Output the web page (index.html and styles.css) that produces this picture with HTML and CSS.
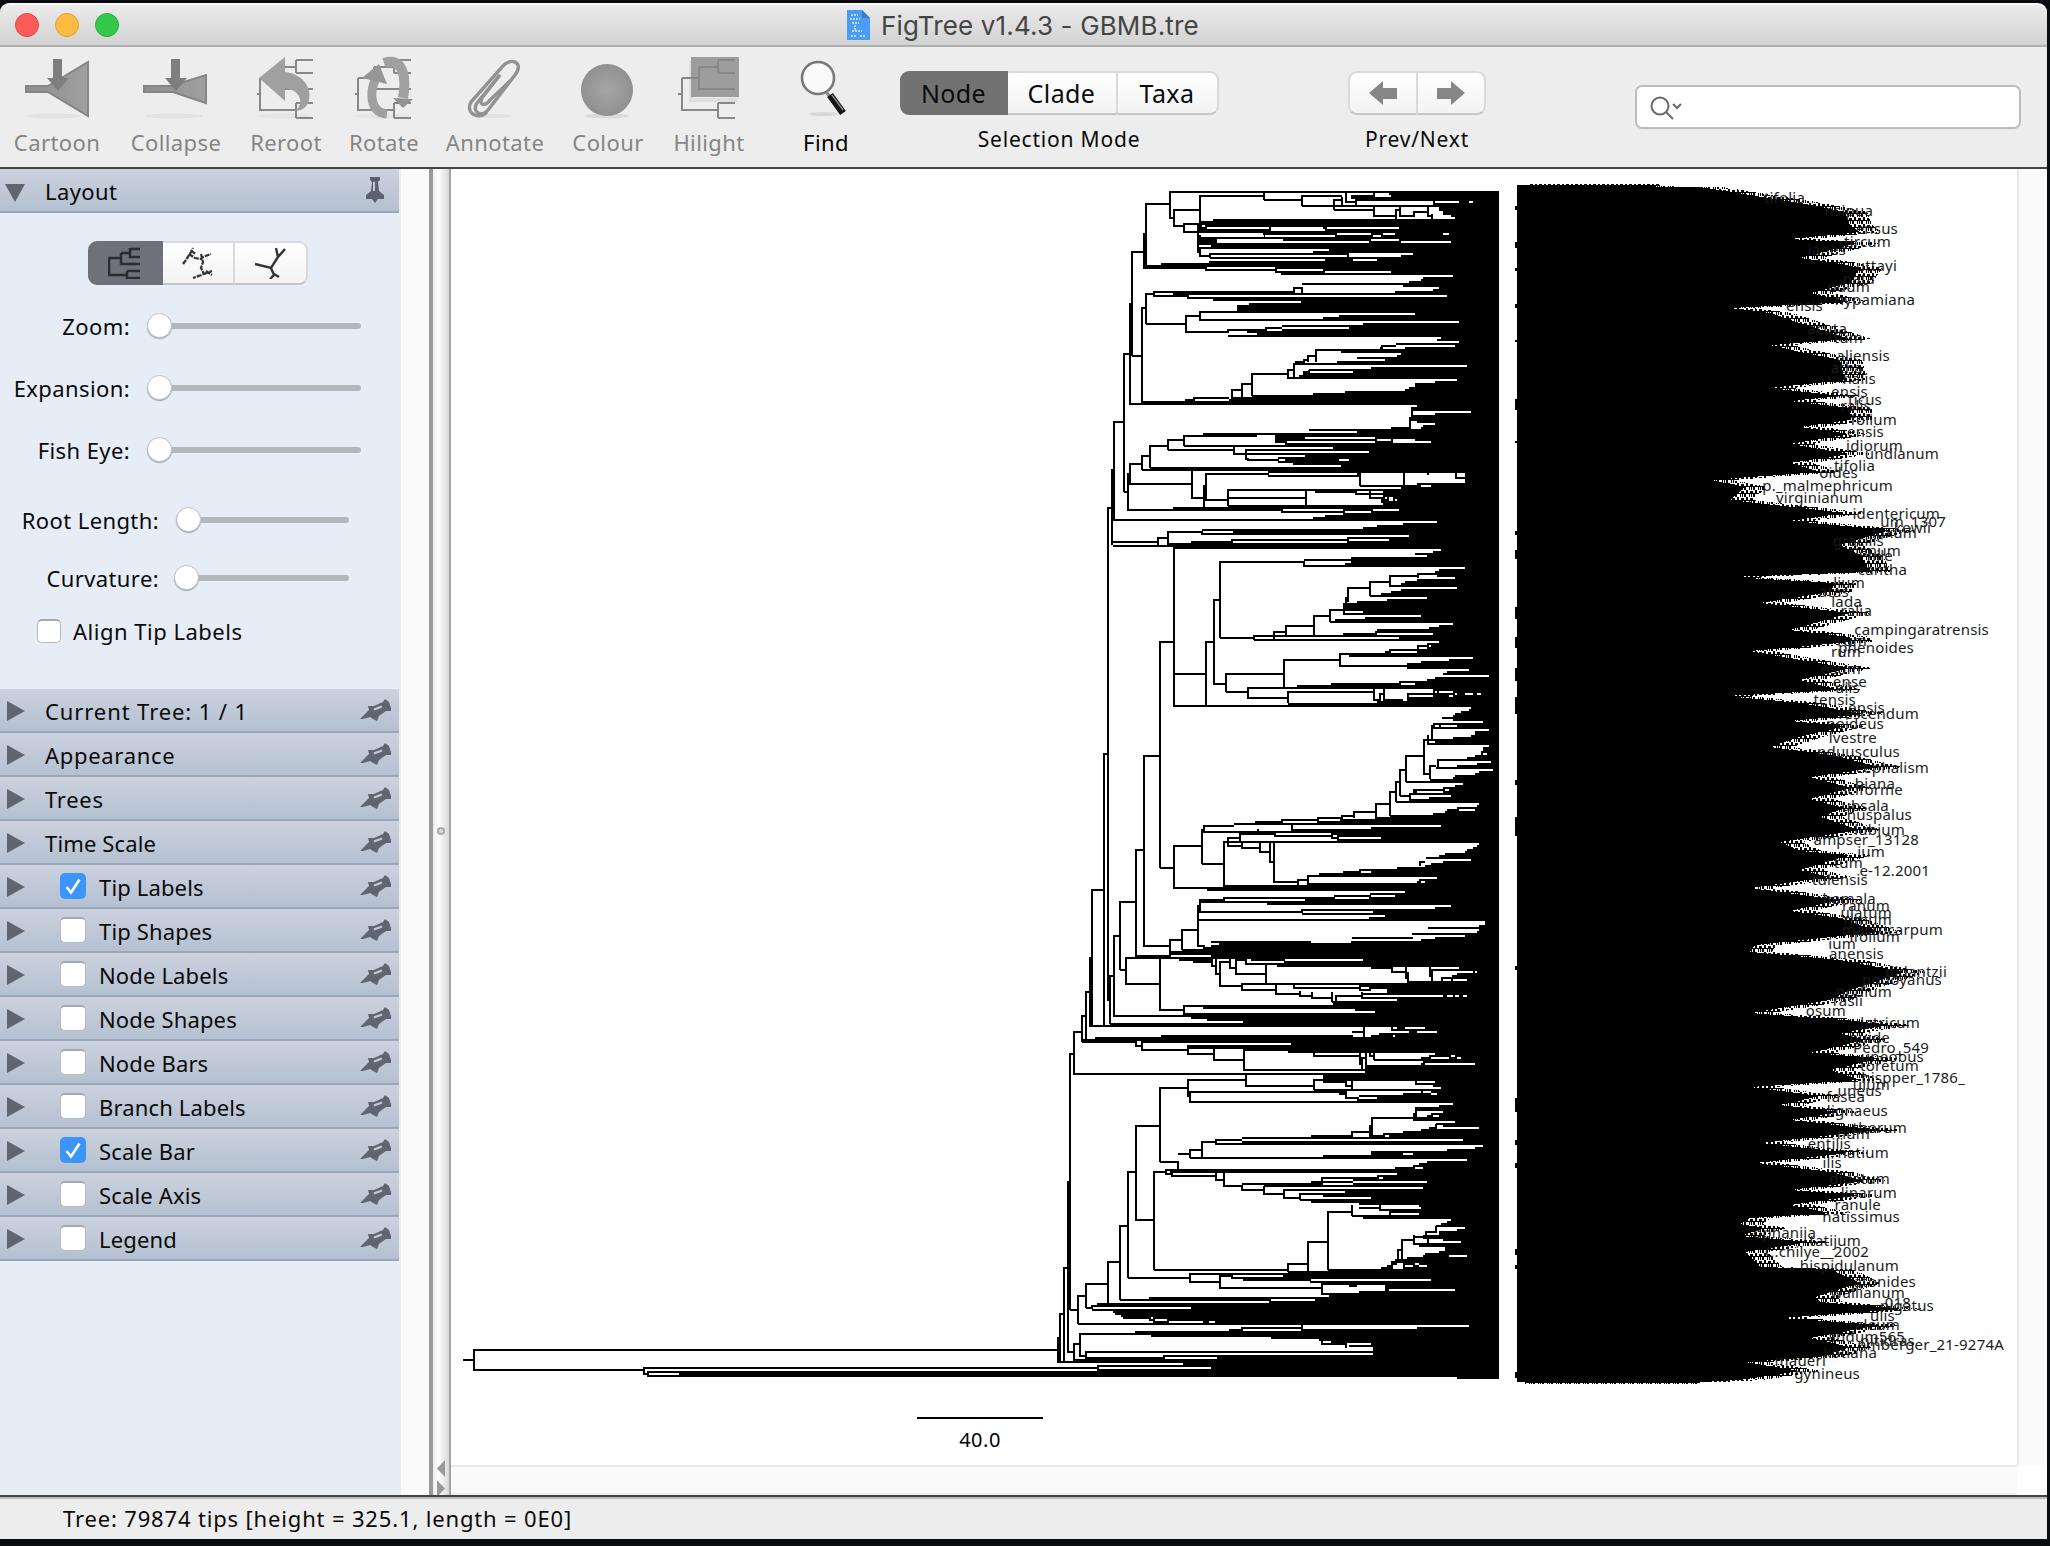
FILE: index.html
```html
<!DOCTYPE html>
<html lang="en">
<head>
<meta charset="utf-8">
<title>FigTree v1.4.3 - GBMB.tre</title>
<link rel="stylesheet" href="styles.css">
</head>
<body>
<svg class="defs" width="0" height="0" aria-hidden="true">
  <defs>
    <symbol id="pin" viewBox="0 0 32 24"><path d="M0 20L6 14L9 11L8 7H14L23 3L25 0L29 3L31 9V12L26 12L19 17L17 22L13 20L10 18L3 20Z" fill="#5f6670"/><path d="M14 10.500L22 7.500" stroke="#c3cad7" stroke-width="2"/></symbol>
    <symbol id="right" viewBox="0 0 18 20"><path d="M0 0L18 10L0 20Z" fill="#60666f"/></symbol>
    <symbol id="check" viewBox="0 0 26 26"><path d="M6.500 14L11 19.500L19.500 6.500" fill="none" stroke="#fff" stroke-width="2.600"/></symbol>
    <linearGradient id="metal" x1="0" y1="0" x2="1" y2="0"><stop offset="0" stop-color="#8e8e8e"/><stop offset="1" stop-color="#a0a0a0"/></linearGradient>
    <radialGradient id="ball"><stop offset="0" stop-color="#a6a6a6"/><stop offset="1" stop-color="#909090"/></radialGradient>
    <pattern id="grain" width="9" height="7" patternUnits="userSpaceOnUse"><path d="M0 1H3V3H9V4H5V7H3V4H0ZM5 0H7V3H5ZM8 4H9V7H8ZM1 4H2V7H1Z"/></pattern>
  </defs>
</svg>
<div class="window">
  <header class="titlebar">
    <div class="lights"><i class="close"></i><i class="min"></i><i class="max"></i></div>
    <div class="title">
      <svg width="23" height="30" viewBox="0 0 23 30"><path d="M0 0H15L23 8V30H0Z" fill="#4c9bf5"/><path d="M15 0V8H23Z" fill="#3a7cc9"/><g fill="none" stroke="#b7dbff" stroke-width="2" stroke-dasharray="2 1"><path d="M4 5H11M3 9H13M5 13H12M8 15V21M5 21H15M4 26H9M13 26H18"/></g></svg>
      <span>FigTree v1.4.3 - GBMB.tre</span>
    </div>
  </header>
  <div class="toolbar">
    <div class="tool"><svg width="72" height="66"><ellipse cx="34" cy="60" rx="28" ry="2.500" fill="#e2e2e2"/><path d="M6 30H28L68 6V60L28 36H6Z" fill="url(#metal)" stroke="#858585" stroke-width="2"/><path d="M33 3H42V22H49L38 35L27 22H33Z" fill="#7e7e7e"/></svg><span>Cartoon</span></div>
    <div class="tool"><svg width="72" height="66"><ellipse cx="35" cy="60" rx="29" ry="2.500" fill="#e2e2e2"/><path d="M5 30H32L67 19V47L34 36H5Z" fill="url(#metal)" stroke="#858585" stroke-width="2"/><path d="M32 3H41V22H48L37 35L26 22H32Z" fill="#7e7e7e"/></svg><span>Collapse</span></div>
    <div class="tool"><svg width="72" height="66"><ellipse cx="35" cy="60" rx="28" ry="2.500" fill="#e4e4e4"/><path d="M8 38H11M11 22V54H47M47 47V62M47 47H64M47 62H64M11 22H27M27 11H47M47 4V17M47 4H64M47 17H64M27 11V33H64" fill="none" stroke="#888" stroke-width="2"/><path d="M10 22L36 1V16C54 18 63 32 60 44C58 52 53 54 47 55C55 46 52 35 36 32V45Z" fill="#a0a0a0"/></svg><span>Reroot</span></div>
    <div class="tool"><svg width="72" height="66"><ellipse cx="35" cy="60" rx="28" ry="2.500" fill="#e4e4e4"/><path d="M8 38H11M11 22V54H47M47 47V62M47 47H64M47 62H64M11 22H27M27 11H47M47 4V17M47 4H64M47 17H64M27 11V33H64" fill="none" stroke="#888" stroke-width="2"/><path d="M40 58C22 56 23 36 28 24" fill="none" stroke="#a0a0a0" stroke-width="9"/><path d="M15 22L32 8L40 28Z" fill="#969696"/><path d="M37 7C55 1 60 19 56 42" fill="none" stroke="#a0a0a0" stroke-width="10"/><path d="M46 42L66 43L56 52Z" fill="#929292"/></svg><span>Rotate</span></div>
    <div class="tool"><svg width="72" height="66"><ellipse cx="35" cy="60" rx="17" ry="2" fill="#e0e0e0"/><g fill="none" stroke="#929292" stroke-width="3.400" stroke-linecap="round"><path d="M41 20L19 47C13 56 24 62 30 54L57 19C67 6 52 1 45 10L13 46C7 57 20 64 28 57"/><path d="M41 20L24 42C20 50 28 50 32 44L52 25"/></g></svg><span>Annotate</span></div>
    <div class="tool"><svg width="72" height="66"><ellipse cx="36" cy="60" rx="22" ry="2.500" fill="#dadada"/><circle cx="36" cy="34" r="26" fill="url(#ball)"/></svg><span>Colour</span></div>
    <div class="tool"><svg width="72" height="66"><path d="M17 4H22V42H66V46H17Z" fill="#dedede"/><path d="M19 1H67V41H19Z" fill="#9d9d9d"/><path d="M6 38H10M10 22V54H46M46 47V62M46 47H63M46 62H63M10 22H27M27 11H46M46 4V17M46 4H63M46 17H63M27 11V33H63" fill="none" stroke="#888" stroke-width="2"/></svg><span>Hilight</span></div>
    <div class="tool find"><svg width="72" height="66"><ellipse cx="34" cy="58" rx="14" ry="2" fill="#d8d8d8"/><circle cx="29" cy="22" r="16" fill="#fafafa" stroke="#777" stroke-width="2.500"/><path d="M37 36L42 42" stroke="#888" stroke-width="3"/><path d="M41 39L54 57" stroke="#151515" stroke-width="7"/><path d="M43 39L54 54" stroke="#888" stroke-width="1.500"/></svg><span>Find</span></div>
    <div class="group">
      <div class="segments modes"><b class="on">Node</b><b>Clade</b><b>Taxa</b></div>
      <span>Selection Mode</span>
    </div>
    <div></div>
    <div class="group">
      <div class="segments nav"><b><svg width="28" height="24"><path d="M0 12L14 0V7H28V18H14V24Z" fill="#868686"/></svg></b><b><svg width="28" height="24"><path d="M28 12L14 0V7H0V18H14V24Z" fill="#868686"/></svg></b></div>
      <span>Prev/Next</span>
    </div>
    <div></div>
    <div class="search"><svg width="36" height="26" fill="none" stroke="#6a6a6a" stroke-width="2"><circle cx="10" cy="10" r="8.500"/><path d="M16 16L23 23M23 8L27 12L31 8"/></svg></div>
  </div>
  <main class="body">
    <aside class="sidebar">
      <div class="row open"><svg class="tri" width="20" height="18"><path d="M0 0H20L10 18Z" fill="#60666f"/></svg><span>Layout</span><svg class="pinned" width="18" height="26"><path d="M4 0H14V3L12 5L13 14L18 18V22H12L9 26L6 22H0V18L5 14L6 5L4 3Z" fill="#5c626c"/><path d="M8 5V14" stroke="#c3cad7" stroke-width="2"/></svg></div>
      <div class="panel">
        <div class="segments layouts">
          <b class="on"><svg width="34" height="32"><path d="M1 10V28H19M19 24V31H32M19 24H32M1 11H13M13 6V17H32M13 6H22M22 1V10H32M22 2H32" fill="none" stroke="#292c30" stroke-width="2.500"/></svg></b>
          <b><svg width="34" height="32"><path d="M2 17L5 13L10 5L12 1M8 7L14 11L20 12L22 10L30 7M20 7L22 15L20 21L23 27L12 31M23 27L31 24M10 4L15 7M25 24L31 28" fill="none" stroke="#333" stroke-width="2.200" stroke-dasharray="5 1"/></svg></b>
          <b><svg width="34" height="32"><path d="M1 17L17 21L24 10L22 1M24 10L31 2M17 21L20 28L16 32M20 27L25 30" fill="none" stroke="#333" stroke-width="2.400"/></svg></b>
        </div>
        <div class="slide a"><label>Zoom:</label><i><u></u></i></div>
        <div class="slide a"><label>Expansion:</label><i><u></u></i></div>
        <div class="slide a"><label>Fish Eye:</label><i><u></u></i></div>
        <div class="slide b root-length"><label>Root Length:</label><i><u></u></i></div>
        <div class="slide b curve"><label>Curvature:</label><i><u></u></i></div>
        <div class="align"><em class="box"></em><span>Align Tip Labels</span></div>
      </div>
      <div class="row current"><svg class="tri"><use href="#right"/></svg><span>Current Tree: 1 / 1</span><svg class="pin"><use href="#pin"/></svg></div>
      <div class="row"><svg class="tri"><use href="#right"/></svg><span class="wide">Appearance</span><svg class="pin"><use href="#pin"/></svg></div>
      <div class="row"><svg class="tri"><use href="#right"/></svg><span class="wide">Trees</span><svg class="pin"><use href="#pin"/></svg></div>
      <div class="row"><svg class="tri"><use href="#right"/></svg><span>Time Scale</span><svg class="pin"><use href="#pin"/></svg></div>
      <div class="row"><svg class="tri"><use href="#right"/></svg><em class="box on"><svg><use href="#check"/></svg></em><span>Tip Labels</span><svg class="pin"><use href="#pin"/></svg></div>
      <div class="row"><svg class="tri"><use href="#right"/></svg><em class="box"></em><span>Tip Shapes</span><svg class="pin"><use href="#pin"/></svg></div>
      <div class="row"><svg class="tri"><use href="#right"/></svg><em class="box"></em><span>Node Labels</span><svg class="pin"><use href="#pin"/></svg></div>
      <div class="row"><svg class="tri"><use href="#right"/></svg><em class="box"></em><span>Node Shapes</span><svg class="pin"><use href="#pin"/></svg></div>
      <div class="row"><svg class="tri"><use href="#right"/></svg><em class="box"></em><span>Node Bars</span><svg class="pin"><use href="#pin"/></svg></div>
      <div class="row"><svg class="tri"><use href="#right"/></svg><em class="box"></em><span>Branch Labels</span><svg class="pin"><use href="#pin"/></svg></div>
      <div class="row"><svg class="tri"><use href="#right"/></svg><em class="box on"><svg><use href="#check"/></svg></em><span>Scale Bar</span><svg class="pin"><use href="#pin"/></svg></div>
      <div class="row"><svg class="tri"><use href="#right"/></svg><em class="box"></em><span>Scale Axis</span><svg class="pin"><use href="#pin"/></svg></div>
      <div class="row"><svg class="tri"><use href="#right"/></svg><em class="box"></em><span>Legend</span><svg class="pin"><use href="#pin"/></svg></div>
    </aside>
    <div class="track side"></div>
    <div class="splitter"><i class="dot"></i><svg width="10" height="40"><path d="M9 0V17L1 8.500ZM1 20V37L9 28.500Z" fill="#999"/></svg></div>
    <section class="view">
      <svg class="tree" viewBox="451 169 1566 1296" width="1566" height="1296">
        <!-- upper clades -->
        <g transform="translate(1040 170) scale(.333333)">
          <path d="M1377 63H1047V75H933V93H1180V105H1003V111H1197V123H1209V135H1233V141H1245V147H519V153H478V171H474V195H672V201H483V219H513V225H477V237H819V249H510V267H855V273H507V279H363V285H315V291H498V303H708V309H723V315H1239V321H1149V327H1143V333H1107V339H786V345H1089V351H1197V357H1179V363H1065V369H399V375H1221V381H444V387H519V393H783V399H627V405H591V423H480V429H1125V435H897V441H849V447H480V453H1257V459H969V465H726V471H927V477H726V483H621V489H651V495H564V501H1203V507H1191V513H1257V519H1068V525H1245V531H1095V537H828V543H903V549H1083V555H1071V561H951V567H1035V573H891V579H762V585H1281V591H993V597H808V603H939V609H790V615H777V621H744V627H1251V633H1185V639H1125V651H1107V657H1095V663H915V669H819V675H636V681H573V687H567V693H489V699H270V705H1131V711H1113V723H1293V729H1185V735H1113V741H1107V753H1131V759H1185V765H1149V771H1053V777H808V783H951V789H489V795H432V801H705V819H735V825H432V831H879V837H615V843H987V849H621V855H795V861H714V879H759V885H903V891H330V897H306V903H684V921H1245V927H1275V939H1131V945H960V951H1083V957H564V963H825V969H945V975H1029V981H1023V999H1029V1005H564V1011H399V1017H723V1029H909V1035H855V1041H819V1047H220V1053H1191V1059H1089V1065H1011V1071H969V1077H486V1083H579V1089H486V1095H1107V1101H921V1107H573V1113H453V1119H384V1125H220V1131H399V1137H1377Z"/>
          <path class="cut" d="M921 72H1002M1005 78H1053M927 90H945M1185 96H1257M1287 96H1299M486 168H495M501 174H690M693 174H849M693 180H855M861 174H1077M477 192H669M891 192H993M1029 192H1065M1209 192H1227M675 198H885M999 198H1023M531 210H729M993 210H1077M531 216H987M1083 216H1233M477 228H513M483 240H867M927 252H1119M513 258H921M927 258H1083M939 270H1011M501 294H705M711 300H849M855 306H1053M1113 774H1143M651 798H705M795 804H1005M1011 810H1053M1059 810H1125M741 816H1005M1059 816H1173M717 870H735M897 870H927M687 912H951M963 912H1089M963 918H1089M1095 912H1161M1095 918H1245M963 924H1089M1167 912H1245M1251 912H1275M1251 918H1275M1143 948H1173M951 966H987M993 966H1029M1035 984H1041M1047 984H1059M1047 990H1059M1065 990H1071M729 1020H909M999 1020H1077M915 1026H993M927 1110H1047M579 1116H921"/>
          <path class="ln" d="M390 63V147M318 99V285M402 117V171M318 102H390M388 66H1060M390 144H402M402 120H480M480 75V156M480 78H672M672 66V90M672 90H786M786 75V108M786 78H906M786 108H906M882 87V120M882 90H906M906 80V111M918 66V96H948V108M906 108H1180M882 120H1002M1002 108V138H1068M1068 147V120H1080V108V138H1122V126H1164V111V138H1176V132V147M1002 66V81M402 168H432M432 159V189M432 162H480M432 186H474M474 160V249M480 195V222H519V207H528M474 246H480V234V258H510V249V264M690 171V183M312 189V297M276 243V558M276 246H312M309 294H498V303M498 300H708V291V306H855M270 399V705M306 411V699M306 414H318V369V462M318 372H342V363V378H444V384H520M342 366H762V354H786V372M762 366V372M318 462H438V435V486H564V477M438 438H480V423V453M564 480H678V474H726M678 471V486M276 558H306M252 552H270M252 549V966M1020 534H1026V528H1068M828 537V576M828 558H804V576M804 570H792V576H765M762 579V627M762 600H744V627M808 600V606H792V618M744 612H636V678M636 642H606V681M606 660H576V687M567 684H462V699M462 690H438V699M306 696H490M222 756H252M222 753V1053M1116 711V741M1110 741V777M432 795V828M432 810H384V840M384 828H330V894M384 840H582V828V852H618V837V867H624V870H714M330 858H306V900M306 882H270V942H456M456 900V984H492M492 945V1011M498 909V990M492 990H564V957V1008M564 984H798V960V1008M498 912H684M264 909V1020H726M252 966H264M960 909V948M1092 912V948M1248 909V924M990 963V984H1029M216 897V1125M204 1170V1014H216M219 1116H354V1104H384V1083V1128M354 1104V1128M219 1128H402M384 1086H486V1095"/>
        </g>
        <!-- middle clades -->
        <g transform="translate(1040 540) scale(.333333)">
          <path d="M1377 27H1203V33H1179V39H1125V45H1161V51H933V57H792V63H933V69H915V75H792V81H1275V87H1197V93H1185V99H1131V105H1191V111H1245V117H1131V123H1095V129H1083V135H1050V141H1251V147H1083V153H1053V159H1023V165H990V171H1161V177H1041V183H951V189H909V213H969V219H909V225H1143V231H975V237H885V243H870V249H1239V255H1197V261H1167V267H1011V273H1005V279H909V285H738V291H1077V297H642V303H1197V309H1161V327H1050V333H1035V339H900V345H927V351H1299V357H1227V363H1143V369H1101V375H900V381H1101V387H1287V393H1221V399H1209V405H1347V411H1185V417H1161V423H1077V435H771V441H624V447H1179V471H1101V477H1087V483H1011V489H744V495H399V501H1293V507H1287V513H1263V519H1245V525H1239V531H1206V537H1239V543H1329V549H1179V555H1173V567H1347V573H1305V585H1293V591H1239V597H1152V603H1161V615H1347V621H1329V633H1323V645H1305V651H1281V657H1191V663H1353V669H1311V675H1251V681H1188V687H1359V693H1317V699H1305V705H1245V711H1239V717H1170V723H1098V729H1269V735H1245V741H1209V747H1119V759H1110V765H1233V771H1167V777H1110V783H1068V789H1317V795H1311V801H1251V807H1221V813H1215V819H1179V825H1050V831H1005V837H723V843H645V849H582V855H1203V861H993V867H651V873H486V879H873V885H891V897H891V903H552V909H1317V915H1311V921H1299V927H1281V933H1275V939H1215V945H1197V951H1158V957H1293V963H1209V969H1173V975H1155V981H1071V987H957V993H909V999H837V1005H804V1011H1191V1017H1137V1023H1131V1029H804V1035H552V1041H399V1047H501V1053H1095V1059H990V1065H882V1071H552V1077H795V1083H480V1089H681V1095H1233V1101H1185V1107H786V1113H999V1119H786V1125H1035V1131H987V1137H474V1143H1377Z"/>
          <path class="cut" d="M1011 282H1179M1167 318H1173M1053 336H1131M1083 432H1125M1185 456H1191M1197 456H1239M1245 462H1251M1275 462H1299M1311 462H1323M1227 468H1239M1089 480H1101M1185 558H1197M1203 558H1251M1167 606H1185M1329 642H1341M1215 750H1227M1131 756H1209M1257 810H1305M837 840H900M729 846H831M657 870H753M897 894H1023M963 996H993M1143 1026H1155M993 1068H1065M885 1074H987"/>
          <path class="ln" d="M204 0V1170M402 18V498M540 63V294M540 66H792V81M522 180H540M522 177V432H558M498 306H522M498 303V498M402 402H498M558 399V456M558 402H732M732 357V444M732 360H900V339V378H1101M558 456H624M624 441V474H744M744 489V456H1002M1002 447V480H1020V459M1020 486V462H1032V447V480H1090M1104 477V462H1180M540 294H642V285V300M642 288H738V258H822M702 297V276H738M822 288V228H870M870 207V246M870 210H912M912 189V222M918 171V189M924 186V144H990M990 123V168M990 126H1050V105V138H1083M1050 108H1134V99V114M1050 327V336M1134 330V318H1164M876 441V432H1077M360 303V984M360 306H402M312 648H360M312 645V1170M288 930H312M288 927V1170M240 1170V1086H288M192 1170V642H204M156 1170V1050H192M360 984H402M402 915V1044M402 918H486M486 867V972M486 972H552M492 876V858H582M552 903V1040M552 906H564V894H600V879V906M564 894V918H606V906V924H660V906V936H690V906V966H702V906V1026H774M600 882H705V888H876V879V894H894V900M774 1038V1020H804V1005V1035M756 855V873M1176 555V600M1164 585V600M1152 597V702H1170M1170 717V678H1188M1194 660V684M1098 726V648H1152M1080 768V690H1098M1080 768H1110M1068 786V726H1080M1050 828V756H1068M1008 834V792H1050M942 834V816H1008M906 840V828H942M834 846V834H906M726 846V840H834M1110 759V783M1140 978V966H1155M480 1116V1080H552V1071V1086M474 1170V1095M480 1116H786"/>
        </g>
        <!-- lower clades -->
        <g transform="translate(1040 900) scale(.333333)">
          <path d="M1377 63H1335V75H1317V81H1163V87H1317V93H1311V99H1116V105H1275V111H936V117H1143V123H513V129H537V135H489V147H426V153H387V165H288V171H258V177H417V183H735V189H618V195H711V201H993V207H1257V213H1299V219H1251V225H1236V231H1203V243H1101V249H603V255H957V273H1041V279H963V303H876V309H879V315H432V321H489V327H945V333H1005V339H432V345H220V351H453V357H501V363H609V369H210V375H150V381H969V387H1053V393H936V399H1017V405H363V411H165V417H125V429H753V435H444V447H609V453H744V459H1185V465H1167V471H1143V477H1002V483H1149V489H1143V495H978V501H975V507H609V513H975V519H99V525H618V531H849V543H1125V555H1179V561H1203V567H822V573H900V579H1089V585H957V603H447V609H1239V615H1197V621H1131V627H1125V633H1209V639H1173V645H1161V651H996V657H1119V663H1245V669H1188V675H1209V681H1167V687H1143V693H1089V699H1030V705H813V711H606V717H1269V723H606V729H525V735H1329V741H1305V747H1221V753H993V765H849V771H450V777H1281V783H1161V789H1137V795H1119V801H1065V807H375V813H390V819H1071V825H1011V831H846V837H939V843H813V849H606V855H672V861H1149V867H732V873H915V879H780V885H849V891H993V897H780V903H813V909H957V915H1137V921H1143V927H1017V933H1047V945H936V951H969V957H1233V963H1221V969H1203V975H1188V981H1275V987H1251V993H1197V1005H1149V1017H1209V1023H1263V1029H1140V1041H1215V1053H1197V1059H1155V1065H1149V1071H1101V1077H1065V1083H1053V1095H1041V1101H1023V1107H864V1113H744V1119H447V1125H540V1131H573V1137H609V1143H810V1149H846V1155H927V1161H1035V1173H957V1179H846V1185H867V1191H327V1197H240V1203H687V1209H171V1215H153V1227H156V1233H219V1239H225V1245H243V1251H249V1257H327V1263H339V1269H114V1275H783V1281H603V1287H567V1293H285V1299H120V1305H333V1311H693V1317H837V1323H873V1329H993V1335H927V1341H999V1353H135V1359H999V1365H369V1371H135V1377H99V1383H51V1389H429V1395H171V1413H-1083V1431H1251V1437H1377Z"/>
          <path class="cut" d="M1119 114H1185M813 126H933M495 138H513M393 168H513M519 180H525M531 180H567M573 180H585M621 180H633M735 180H969M1059 204H1095M1101 204H1167M1173 204H1257M1263 216H1299M1305 216H1311M1209 240H1233M1239 240H1281M609 258H705M765 258H957M963 264H987M993 270H1041M969 288H1209M1221 288H1239M1245 288H1257M1269 288H1281M891 300H1071M975 384H1053M1059 384H1071M1095 384H1155M975 396H1107M1131 396H1191M939 402H969M939 408H969M975 408H993M1059 408H1065M291 426H303M447 450H519M1233 468H1245M1173 474H1227M1251 474H1263M1155 492H1305M621 528H849M621 534H849M1131 546H1185M921 576H1143M1149 576H1173M1173 582H1191M957 594H1011M1179 648H1197M1191 684H1317M939 702H987M939 708H987M1035 708H1047M531 726H603M1089 762H1119M1125 804H1149M1017 834H1029M939 846H1161M819 852H843M849 852H939M735 876H915M963 918H1017M1053 942H1137M1227 1068H1281M1071 1092H1089M1125 1092H1137M1059 1098H1089M1095 1098H1119M1137 1098H1161M1059 1104H1089M579 1128H729M813 1140H1173M951 1158H1035M1047 1170H1245M693 1200H825M159 1224H453M333 1254H339M345 1260H381M387 1266H489M507 1266H525M789 1278H1287M789 1284H1131M609 1290H783M375 1374H531M177 1404H513"/>
          <path class="ln" d="M156 0V378M192 0V378M204 0V303M150 171V380M138 420V276H150M126 426V348H138M102 522V396H126M90 1230V462H102M240 210V6H288M288 0V171M312 0V138H390V120H426V90H474M390 138V165M426 120V150M474 15V138H492M480 0V36H786V30H1000M240 210H258M258 171V252H360M360 174V330H432M432 315V345M222 348V108H240M210 372V228H222M459 186H516V177V198H528V177V222H540V186H570M540 222V258H606M606 249V270H708V255V282H780V273V288H816V276V294H876V276V306M888 306V288H966V276M570 177V204H588V183V222H678V192V252M618 177V192H735V183M762 255V264H960V255M1056 201V216H1101M1098 201V237M1104 216V246M1170 201V231M1176 243V210H1257M288 420V438H306V426V450H444V435V462H522V444V480H612V447V510M444 444H612M744 456H822V447V468H960M960 447V495M966 507V474H978M978 507V459M972 381V411M978 456H990V468H1002V480M1002 459V480M444 537V590M360 786V564H444V540H618V525V558H822V537V570M822 540H852V546H918V558H936V543V570M444 576H900V582H918V594H954V603M450 573V606M918 573V594M1146 573V588H1092M360 786H414V810M414 762H450V747V774M450 750H486V723V774M486 726H528V717V732M528 720H606M288 678H360M288 675V960H342M342 1110V816H378V822H396V828H528V819V840H552V819V858H606V870H672V858V882H732V867V894H780V879V900M264 1134V816H288M342 1110H744V1092H804V1026H864V936H936V915V948M744 1092V1116M804 1026V1113M864 936V1110M957 924H1020V915V930M813 852H846V831M936 711V696H990M990 675V711M996 651V705M1128 621V657M1122 640V660H1180M1188 672V690M240 1200V978H264M204 1212V1086H240M138 1224V1152H204M138 1224H156M114 1272V1188H138M90 1230H114M264 1134H450V1119V1146H540V1125V1164H846V1149V1185M1086 1077V1020H1122M1122 1005V1032H1140V1041M1074 1080V1050H1086M1164 1014V1029M1188 978V996H1158V1010H1122M1056 1107V1086M84 843V1356H102M72 1385V1104H84M60 1385V1242H72M54 1311V1388M102 1380V1332H120V1299V1368H138V1353M846 1317V1332H918V1344M786 1275V1293M603 1284H786"/>
        </g>
        <path class="root" d="M463 1360H474M474 1349V1371M474 1350H1058M474 1370H644M644 1367V1375M644 1368H1098M644 1374H648M648 1371V1377M648 1372H1100M648 1376H1100"/>
        <g class="names">
          <path id="mass" d="M1517 185L1700 187L1750 195L1800 203L1845 212L1850 225L1860 232L1790 239L1858 243L1800 258L1830 262L1860 268L1850 283L1810 293L1850 302L1730 308L1770 313L1800 323L1850 339L1770 345L1800 352L1840 360L1845 380L1770 388L1840 396L1790 401L1850 408L1850 420L1800 427L1850 434L1790 444L1850 454L1790 463L1820 472L1710 480L1745 487L1730 500L1845 513L1790 521L1890 530L1840 545L1860 555L1870 572L1730 577L1835 583L1830 592L1760 603L1850 613L1790 630L1850 637L1850 642L1750 651L1800 660L1850 668L1800 680L1840 690L1725 696L1800 703L1865 714L1790 721L1845 726L1800 737L1770 747L1830 755L1880 767L1810 777L1850 788L1810 799L1845 808L1820 817L1860 830L1780 842L1800 851L1850 855L1800 870L1830 877L1750 888L1840 900L1790 911L1840 918L1880 932L1755 945L1750 952L1840 960L1905 972L1850 990L1830 1000L1750 1013L1845 1020L1890 1025L1840 1033L1865 1040L1810 1053L1880 1058L1830 1070L1860 1080L1750 1087L1820 1096L1780 1105L1840 1112L1790 1120L1880 1130L1760 1143L1850 1153L1755 1163L1830 1172L1865 1181L1790 1190L1860 1195L1790 1205L1830 1213L1750 1218L1740 1224L1765 1228L1740 1236L1810 1242L1745 1252L1760 1267L1830 1269L1860 1283L1815 1297L1820 1302L1905 1309L1780 1318L1880 1325L1810 1338L1850 1347L1820 1357L1745 1362L1800 1371L1740 1380L1700 1382L1517 1382Z"/>
          <use href="#mass" class="edge" x="22"/>
          <path d="M1530 184H1660V187H1530ZM1525 1381H1700V1384H1525Z" fill="url(#grain)"/>
          <path d="M1516 206V210M1516 242V248M1516 268V271M1516 304V308M1516 340V342M1516 399V410M1516 441V443M1516 531V535M1516 550V559M1516 607V619M1516 637V648M1516 668V681M1516 697V714M1516 780V785M1516 817V836M1516 966V970M1516 1098V1112M1516 1140V1145M1516 1163V1168M1516 1249V1255M1516 1265V1269M1516 1372V1378" stroke="#000" stroke-width="2"/>
          <g id="labels" class="labels"></g>
        </g>
        <path class="root" d="M917 1418H1043"/>
        <text class="scale" x="980" y="1447">40.0</text>
      </svg>
      <div class="track right"></div>
      <div class="track bottom"></div>
    </section>
  </main>
  <footer class="status">Tree: 79874 tips [height = 325.1, length = 0E0]</footer>
</div>
<script src="labels.js"></script>
</body>
</html>
```
FILE: labels.js
```js
// Tip labels that stick out of the crowd: text, right edge, baseline.
const tips = `tifolia 1805 203|nsipua 1873 216|ensus 1898 234|tircum 1891 247|ianes 1846 255|uttayi 1897 271|nata 1875 284|odum 1870 292|hypamiana 1915 305|ensis 1823 311|acuta 1847 334|tum 1863 343|aliensis 1890 361|atha 1863 373|nalis 1876 384|ensis 1868 397|ticus 1882 405|ralis 1871 411|folium 1897 425|ensis 1884 437|idiorum 1903 451|undianum 1939 459|tifolia 1875 471|oides 1858 478|p._malmephricum 1893 491|virginianum 1863 503|identericum 1940 519|um_1307 1946 527|kowii 1931 533|luxum 1917 538|gracilis 1884 546|rianum 1901 556|hile 1893 561|cantha 1907 575|lium 1865 588|atas 1849 597|lada 1862 607|ralia 1872 616|campingaratrensis 1989 635|rum 1867 646|phenoides 1914 653|rum 1861 657|osum 1861 674|ense 1867 687|alis 1860 693|tensis 1856 705|ensis 1885 713|rescendum 1919 719|noideus 1884 729|lvestre 1877 743|nduusculus 1900 757|cephalism 1929 773|biana 1895 789|niciforme 1903 795|ubsala 1889 811|nuspalus 1912 820|lubium 1905 835|ampser_13128 1919 845|ium 1885 857|tum 1863 868|e-12.2001 1930 876|tulensis 1868 885|hamala 1876 904|ranum 1890 911|ulatum 1892 918|rimum 1892 925|macrocarpum 1943 935|ifolium 1900 942|ium 1856 949|anensis 1884 959|didantzii 1947 977|podoyanus 1942 985|nodium 1892 997|rasii 1863 1006|osum 1846 1016|latricum 1920 1028|nuide 1890 1043|Pedro_549 1929 1053|uneobus 1924 1062|toretum 1919 1071|hispper_1786_ 1965 1083|ulum 1890 1090|uneus 1882 1096|fasea 1865 1102|lignaeus 1888 1116|thorum 1907 1133|num 1870 1139|entilis 1851 1149|natium 1889 1158|ilis 1842 1168|didatum 1890 1184|linarum 1897 1198|ranule 1881 1210|natissimus 1900 1222|ophanija 1816 1238|tatijum 1861 1246|C.chilye__2002 1869 1257|hispidulanum 1899 1271|atonides 1916 1287|wallianum 1905 1298|_018 1911 1308|nigatus 1934 1311|ulis 1895 1321|raleum 1900 1330|andum565 1905 1342|nitidras 1915 1346|nmberger_21-9274A 2004 1350|kotiana 1877 1358|maueri 1826 1366|gynineus 1860 1379`;

const layer = document.getElementById("labels");
for (const tip of tips.split("|")) {
  const [name, x, y] = tip.split(" ");
  const text = document.createElementNS("http://www.w3.org/2000/svg", "text");
  text.setAttribute("x", x);
  text.setAttribute("y", y);
  text.textContent = name;
  layer.append(text);
}
```
FILE: styles.css
```css
* { box-sizing: border-box; }
body {
  margin: 0;
  width: 2050px;
  height: 1546px;
  overflow: hidden;
  background: #0b0c0f;
  color: #0a0a0a;
  font: 22px/28px "Noto Sans", sans-serif;
  letter-spacing: .4px;
}
svg { display: block; }
.defs { position: absolute; }
.window {
  width: 2047px;
  height: 1539px;
  padding-top: 3px;
  display: flex;
  flex-direction: column;
}
.titlebar {
  height: 44px;
  flex: none;
  display: grid;
  grid-template-columns: 847px 1fr;
  align-items: center;
  border-radius: 9px 9px 0 0;
  border-top: 2px solid #f8f8f8;
  border-bottom: 2px solid #b0b0b0;
  background: linear-gradient(#ebebeb, #d2d2d2);
}
.lights { display: flex; gap: 16px; padding-left: 15px; }
.lights i { width: 24px; height: 24px; border-radius: 50%; border: 1px solid #e0443e; background: #fc5b57; }
.lights .min { border-color: #dea034; background: #fdbc40; }
.lights .max { border-color: #27aa35; background: #34c84a; }
.title {
  display: flex;
  gap: 11px;
  align-items: center;
  color: #454545;
  font: 26px/30px Inter, sans-serif;
  letter-spacing: .15px;
}
.title span { margin-top: 2px; }
.toolbar {
  height: 122px;
  flex: none;
  display: grid;
  grid-template-columns: 112px 126px 94px 102px 120px 106px 96px 138px 330px 118px 150px 143px 386px;
  background: #ededed;
  border-bottom: 2px solid #444;
}
.tool { display: flex; flex-direction: column; align-items: center; padding-top: 9px; color: #858585; white-space: nowrap; }
.tool span { margin: 6px 0 0 2px; }
.find { color: #000; }
.group { display: flex; flex-direction: column; align-items: center; padding-top: 24px; }
.group > span { margin-top: 10px; font-size: 21px; letter-spacing: .8px; }
.segments { height: 44px; display: flex; }
.segments b {
  display: flex;
  align-items: center;
  justify-content: center;
  font-weight: 400;
  border: 2px solid #d8d9dc;
  border-left-width: 0;
  border-bottom-color: #c2c4c7;
  background: linear-gradient(#fff, #f3f3f3);
}
.segments b:first-child { border-left-width: 2px; border-radius: 9px 0 0 9px; }
.segments b:last-child { border-radius: 0 9px 9px 0; }
.segments b.on { border-color: #727272; background: #727272; }
.modes { width: 319px; font-size: 25px; }
.modes b { width: 110px; }
.modes .on { width: 108px; }
.modes b:last-child { width: 101px; }
.nav { width: 138px; }
.nav b { flex: 1; }
.search {
  height: 44px;
  margin-top: 38px;
  padding: 9px 13px;
  border: 2px solid #bdbdbd;
  border-radius: 7px;
  background: #fff;
}
.body { flex: none; height: 1326px; display: flex; background: #fff; }
.sidebar { width: 399px; background: #e6edf7; }
.row {
  height: 44px;
  padding: 0 7px;
  display: flex;
  align-items: center;
  background: linear-gradient(#ccd2de, #b4c0d1);
  border-bottom: 2px solid #9aa7ba;
  letter-spacing: .15px;
}
.row > span { flex: 1; margin: 1px 0 0 20px; }
.row > .wide { letter-spacing: .7px; }
.current { letter-spacing: .9px; }
.row .tri { width: 18px; height: 20px; margin-top: 2px; }
.row.open { letter-spacing: .4px; }
.row.open .tri { width: 20px; height: 18px; margin: 6px 0 0 -2px; }
.pinned { margin-right: 8px; }
.pin { width: 32px; height: 24px; margin-top: 1px; }
.box {
  width: 26px;
  height: 26px;
  margin-left: 35px;
  flex: none;
  border: 1px solid #b6b9be;
  border-top: 2px solid #a5a8ac;
  border-radius: 5px;
  background: #fff;
}
.row > .box + span { margin-left: 13px; }
.box.on { border: 0; background: #3b95fb; }
.box svg { width: 26px; height: 26px; }
.panel { height: 476px; padding-top: 28px; }
.layouts { width: 220px; margin: 0 0 10px 88px; }
.segments.layouts b.on { border-color: #6e7278; background: #6e7278; }
.layouts b { width: 73px; }
.layouts b.on { width: 75px; }
.slide { height: 62px; display: flex; align-items: center; }
.slide label { width: 130px; text-align: right; }
.slide i { width: 202px; height: 6px; margin-left: 29px; border-radius: 3px; background: #b2b7be; }
.slide u {
  display: block;
  width: 25px;
  height: 25px;
  margin: -10px 0 0 -12px;
  border: 1px solid #bcc3cd;
  border-radius: 50%;
  background: #fff;
  box-shadow: 0 1px 1px #9ea5ae;
}
.slide.b { height: 58px; }
.slide.b label { width: 159px; }
.slide.b i { width: 161px; margin-left: 29px; }
.root-length { margin-top: 10px; }
.curve u { margin-left: -14px; }
.align { height: 48px; display: flex; align-items: center; }
.align .box { width: 24px; height: 24px; margin-left: 37px; }
.align span { margin-left: 12px; letter-spacing: .5px; }
.track { background: #fafafa; }
.side { width: 30px; border-left: 2px solid #ececec; }
.splitter {
  width: 22px;
  display: flex;
  flex-direction: column;
  align-items: center;
  border-left: 4px solid #999;
  border-right: 2px solid #a4a4a4;
  background: linear-gradient(90deg, #eee, #fdfdfd 35%, #d8d8d8);
}
.dot { width: 8px; height: 8px; margin-top: 658px; border: 2px solid #aaa; border-radius: 50%; background: #ddd; }
.splitter svg { margin-top: 625px; }
.view { display: grid; grid-template: 1296px 30px / 1566px 30px; }
.right { border-left: 2px solid #e8e8e8; }
.bottom { border-top: 2px solid #e8e8e8; border-bottom: 2px solid #eee; }
.tree .cut, .tree .ln { fill: none; stroke: #000; stroke-width: 6; }
.tree .cut { stroke: #fff; }
.tree path { shape-rendering: crispEdges; }
.tree .root { fill: none; stroke: #000; stroke-width: 2; }
.edge { fill: url(#grain); }
.labels text { font-size: 15px; letter-spacing: .2px; text-anchor: end; fill: #1b1b1b; }
.scale { font-size: 20px; letter-spacing: .5px; text-anchor: middle; }
.status {
  flex: 1;
  padding: 7px 0 0 63px;
  border-top: 2px solid #444;
  box-shadow: inset 0 2px #bbb;
  background: #ededed;
  letter-spacing: .84px;
  white-space: nowrap;
}
```
